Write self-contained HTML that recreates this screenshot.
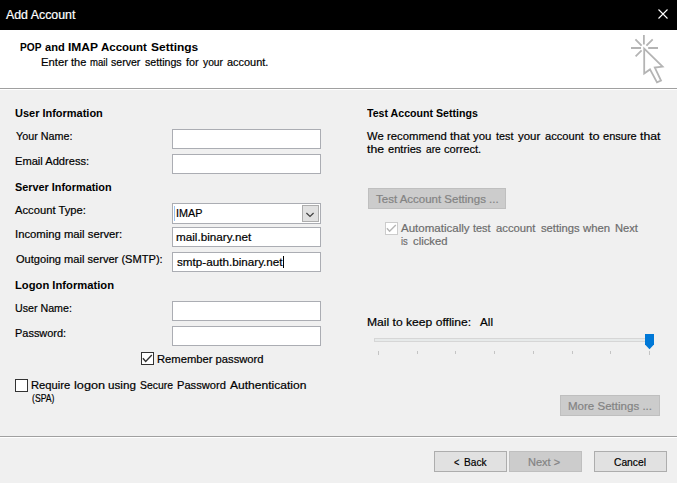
<!DOCTYPE html><html><head><meta charset="utf-8"><title>Add Account</title><style>
html,body{margin:0;padding:0}
body{width:677px;height:483px;overflow:hidden;background:#f0f0f0;position:relative;font-family:"Liberation Sans",sans-serif;font-size:11.5px;line-height:16px;color:#000}
.a{position:absolute}
.t{position:absolute;white-space:pre;line-height:16px;height:16px;transform-origin:0 0;-webkit-text-stroke:0.2px currentColor}
.b{font-weight:bold;-webkit-text-stroke:0}
.ln{height:0}
#tb{left:0;top:0;width:677px;height:30px;background:#000}
#hd{left:0;top:30px;width:677px;height:58px;background:#fff}
.sep{left:0;width:677px;height:1px;background:#a0a0a0}
.in{box-sizing:border-box;background:#fff;border:1px solid #abadb3;left:172px;width:149px;height:20px}
.btn{box-sizing:border-box;background:#e1e1e1;border:1px solid #adadad}
.btn.d{background:#cccccc;border-color:#bfbfbf}
.cb{box-sizing:border-box;width:13px;height:13px;background:#fff;border:1px solid #333}
.tick{width:1px;height:4px;top:351px;background:#c4c4c4}
</style></head><body>
<div class="a" id="tb"></div><div class="a" id="hd"></div>
<div class="a sep" style="top:88px"></div>
<div class="a sep" style="top:436px"></div>
<div class="a sep" style="top:89px;background:#fff"></div>
<div class="a sep" style="top:437px;background:#fff"></div>
<svg class="a" style="left:657px;top:8px" width="12" height="12" viewBox="0 0 12 12"><path d="M1.5 1.5L10.5 10.5M10.5 1.5L1.5 10.5" stroke="#fff" stroke-width="1.1" fill="none"/></svg>
<svg class="a" style="left:626px;top:30px" width="44" height="58" viewBox="626 30 44 58"><g stroke="#b4b4b4" stroke-width="1.8" fill="none" stroke-linecap="butt"><path d="M643.9 35V44.4M631 48H641M648.2 48H658M635.4 39.4L641.6 45.6M652.7 39.4L646.4 45.6M635.6 56.3L641.6 50.4"/><path d="M644.2 48.6V73.6L650 69.4L657 82.4L661 80.6L654.8 67.6L662.6 66.6Z" fill="#fff" stroke-linejoin="miter"/></g></svg>
<div class="a in" style="top:129px"></div>
<div class="a in" style="top:154px"></div>
<div class="a in" style="top:227px"></div>
<div class="a in" style="top:252px"></div>
<div class="a in" style="top:301px"></div>
<div class="a in" style="top:326px"></div>
<div class="a in" style="top:203px;height:21px"></div>
<div class="a" style="left:174px;top:206px;width:1px;height:15px;background:#9cc3ee"></div>
<div class="a btn" style="left:302px;top:205px;width:17px;height:17px"></div>
<svg class="a" style="left:305px;top:210px" width="11" height="9" viewBox="0 0 11 9"><path d="M1.4 3L5 6.5L8.6 3" stroke="#404040" stroke-width="1.2" fill="none"/></svg>
<div class="a" style="left:283px;top:256px;width:1px;height:12px;background:#000"></div>
<div class="a cb" style="left:141px;top:352px"></div>
<svg class="a" style="left:141px;top:352px" width="13" height="13" viewBox="0 0 13 13"><path d="M1.9 6.2L4.7 9.4L10.8 3.1" stroke="#333" stroke-width="1.4" fill="none"/></svg>
<div class="a cb" style="left:15px;top:379px"></div>
<div class="a cb" style="left:385px;top:222px;border-color:#cccccc;background:#fff"></div>
<svg class="a" style="left:385px;top:222px" width="13" height="13" viewBox="0 0 13 13"><path d="M1.9 6.2L4.6 9.3L10.8 3.1" stroke="#b6b6b6" stroke-width="1.4" fill="none"/></svg>
<div class="a btn d" style="left:368px;top:188px;width:138px;height:21px"></div>
<div class="a btn d" style="left:560px;top:395px;width:100px;height:21px"></div>
<div class="a btn" style="left:434px;top:451px;width:73px;height:21px"></div>
<div class="a btn d" style="left:509px;top:451px;width:73px;height:21px"></div>
<div class="a btn" style="left:594px;top:451px;width:73px;height:21px"></div>
<div class="a" style="box-sizing:border-box;left:374px;top:338px;width:280px;height:4px;background:#e7eaea;border:1px solid #d6d6d6"></div>
<div class="a tick" style="left:378px;height:4px"></div>
<div class="a tick" style="left:417px;height:3px"></div>
<div class="a tick" style="left:455px;height:3px"></div>
<div class="a tick" style="left:494px;height:3px"></div>
<div class="a tick" style="left:533px;height:3px"></div>
<div class="a tick" style="left:572px;height:3px"></div>
<div class="a tick" style="left:610px;height:3px"></div>
<div class="a tick" style="left:649px;height:4px"></div>
<svg class="a" style="left:645px;top:334px" width="9" height="16" viewBox="0 0 9 16"><path d="M0 0H9V10.6L4.5 15.2L0 10.6Z" fill="#0078d7"/></svg>
<div class="t" style="left:6px;top:7px;transform:scaleX(1.0289);font-size:12px;color:#fff">Add Account</div>
<div class="ln"><span class="t b" style="left:20px;top:39px;transform:scaleX(0.8831)">POP</span> <span class="t b" style="left:45px;top:39px;transform:scaleX(0.9646)">and</span> <span class="t b" style="left:68px;top:39px;transform:scaleX(1.0448)">IMAP</span> <span class="t b" style="left:101px;top:39px;transform:scaleX(0.998)">Account</span> <span class="t b" style="left:151px;top:39px;transform:scaleX(1.0415)">Settings</span></div>
<div class="ln"><span class="t" style="left:41px;top:54px;transform:scaleX(1.024);font-size:11px">Enter</span> <span class="t" style="left:71px;top:54px;transform:scaleX(1.0);font-size:11px">the</span> <span class="t" style="left:90px;top:54px;transform:scaleX(0.8681);font-size:11px">mail</span> <span class="t" style="left:111px;top:54px;transform:scaleX(0.9597);font-size:11px">server</span> <span class="t" style="left:145px;top:54px;transform:scaleX(0.9671);font-size:11px">settings</span> <span class="t" style="left:186px;top:54px;transform:scaleX(0.9836);font-size:11px">for</span> <span class="t" style="left:203px;top:54px;transform:scaleX(0.9359);font-size:11px">your</span> <span class="t" style="left:227px;top:54px;transform:scaleX(0.9945);font-size:11px">account.</span></div>
<div class="t b" style="left:15px;top:105px;transform:scaleX(0.9542)">User Information</div>
<div class="t" style="left:16px;top:128px;transform:scaleX(0.9351)">Your Name:</div>
<div class="t" style="left:15px;top:153px;transform:scaleX(0.9666)">Email Address:</div>
<div class="t b" style="left:15px;top:179px;transform:scaleX(0.9446)">Server Information</div>
<div class="t" style="left:15px;top:202px;transform:scaleX(0.9749)">Account Type:</div>
<div class="t" style="left:15px;top:226px;transform:scaleX(0.9812)">Incoming mail server:</div>
<div class="t" style="left:16px;top:251px;transform:scaleX(0.9642)">Outgoing mail server (SMTP):</div>
<div class="t b" style="left:15px;top:277px;transform:scaleX(0.9748)">Logon Information</div>
<div class="t" style="left:15px;top:300px;transform:scaleX(0.9265)">User Name:</div>
<div class="t" style="left:15px;top:325px;transform:scaleX(0.953)">Password:</div>
<div class="t" style="left:176px;top:205px;transform:scaleX(0.9382)">IMAP</div>
<div class="t" style="left:176px;top:229px;transform:scaleX(1.0165)">mail.binary.net</div>
<div class="t" style="left:177px;top:254px;transform:scaleX(1.0154)">smtp-auth.binary.net</div>
<div class="t" style="left:157px;top:351px;transform:scaleX(0.9749)">Remember password</div>
<div class="ln"><span class="t" style="left:31px;top:377px;transform:scaleX(0.9723)">Require</span> <span class="t" style="left:74px;top:377px;transform:scaleX(1.104)">logon</span> <span class="t" style="left:108px;top:377px;transform:scaleX(1.0145)">using</span> <span class="t" style="left:140px;top:377px;transform:scaleX(0.9039)">Secure</span> <span class="t" style="left:177px;top:377px;transform:scaleX(0.9668)">Password</span> <span class="t" style="left:230px;top:377px;transform:scaleX(1.0479)">Authentication</span></div>
<div class="t" style="left:32px;top:390px;transform:scaleX(0.7548)">(SPA)</div>
<div class="t b" style="left:367px;top:105px;transform:scaleX(0.9229)">Test Account Settings</div>
<div class="ln"><span class="t" style="left:367px;top:128px;transform:scaleX(0.9752)">We</span> <span class="t" style="left:387px;top:128px;transform:scaleX(0.9837)">recommend</span> <span class="t" style="left:450px;top:128px;transform:scaleX(1.0376)">that</span> <span class="t" style="left:473px;top:128px;transform:scaleX(0.9925)">you</span> <span class="t" style="left:496px;top:128px;transform:scaleX(0.9391)">test</span> <span class="t" style="left:518px;top:128px;transform:scaleX(0.9931)">your</span> <span class="t" style="left:545px;top:128px;transform:scaleX(0.9673)">account</span> <span class="t" style="left:589px;top:128px;transform:scaleX(1.1074)">to</span> <span class="t" style="left:603px;top:128px;transform:scaleX(0.96)">ensure</span> <span class="t" style="left:640px;top:128px;transform:scaleX(1.0634)">that</span></div>
<div class="ln"><span class="t" style="left:367px;top:141px;transform:scaleX(1.0648)">the</span> <span class="t" style="left:388px;top:141px;transform:scaleX(0.9674)">entries</span> <span class="t" style="left:426px;top:141px;transform:scaleX(0.8837)">are</span> <span class="t" style="left:444px;top:141px;transform:scaleX(0.9696)">correct.</span></div>
<div class="t" style="left:376px;top:191px;transform:scaleX(0.9995);color:#838383">Test Account Settings ...</div>
<div class="ln"><span class="t" style="left:401px;top:220px;transform:scaleX(1.0026);color:#6d6d6d">Automatically</span> <span class="t" style="left:473px;top:220px;transform:scaleX(0.9457);color:#6d6d6d">test</span> <span class="t" style="left:496px;top:220px;transform:scaleX(0.9798);color:#6d6d6d">account</span> <span class="t" style="left:541px;top:220px;transform:scaleX(0.9742);color:#6d6d6d">settings</span> <span class="t" style="left:583px;top:220px;transform:scaleX(0.9879);color:#6d6d6d">when</span> <span class="t" style="left:615px;top:220px;transform:scaleX(0.9708);color:#6d6d6d">Next</span></div>
<div class="ln"><span class="t" style="left:401px;top:233px;transform:scaleX(0.819);color:#6d6d6d">is</span> <span class="t" style="left:413px;top:233px;transform:scaleX(0.9791);color:#6d6d6d">clicked</span></div>
<div class="t" style="left:367px;top:314px;transform:scaleX(1.0533)">Mail to keep offline:</div>
<div class="t" style="left:480px;top:314px;transform:scaleX(1.0161)">All</div>
<div class="t" style="left:568px;top:398px;transform:scaleX(1.0034);color:#838383">More Settings ...</div>
<div class="t" style="left:528px;top:454px;transform:scaleX(0.9595);color:#838383">Next &gt;</div>
<div class="t" style="left:614px;top:454px;transform:scaleX(0.8924)">Cancel</div>
<div class="ln"><span class="t" style="left:454px;top:454px;transform:scaleX(0.798)">&lt;</span> <span class="t" style="left:464px;top:454px;transform:scaleX(0.8812)">Back</span></div>
</body></html>
